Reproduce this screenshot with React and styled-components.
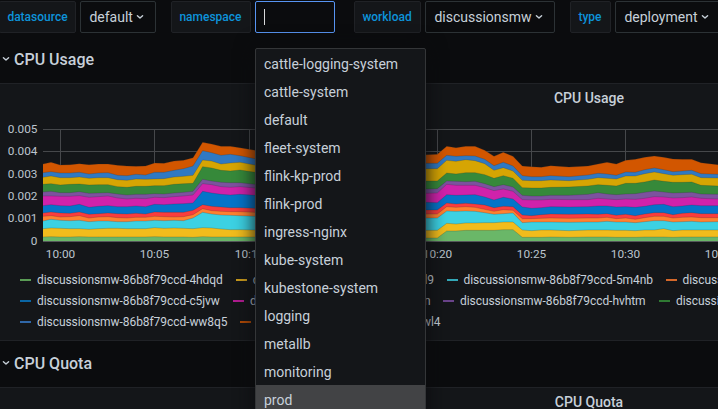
import React from 'react';
import styled, { createGlobalStyle } from 'styled-components';

const GlobalStyle = createGlobalStyle`
  * { box-sizing: border-box; }
  body {
    margin: 0;
    background: #0b0c0e;
    color: #c7d0d9;
    font-family: Roboto, "Liberation Sans", sans-serif;
    font-size: 14px;
    overflow: hidden;
  }
`;

const Page = styled.main`
  position: relative;
  width: 718px;
  height: 409px;
  overflow: hidden;
  background: #0b0c0e;
`;

const Toolbar = styled.div`
  display: flex;
  width: 1178px;
  padding-top: 1px;
  margin-left: -1px;
`;

const Variable = styled.div`
  display: flex;
  flex: none;
  gap: 4px;
  margin-right: ${(p) => p.$after}px;
`;

const VariableLabel = styled.label`
  width: ${(p) => p.$width}px;
  height: 32px;
  padding-left: 7.4px;
  border: 1px solid #202226;
  border-radius: 2px;
  background: #141619;
  color: #0d93da;
  font-size: 12px;
  font-weight: 500;
  line-height: 30px;
  white-space: nowrap;
`;

const VariableValue = styled.button`
  display: flex;
  align-items: center;
  width: ${(p) => p.$width}px;
  height: 32px;
  padding: 0 0 0 8.4px;
  border: 1px solid #2c3235;
  border-radius: 2px;
  background: #0b0c0e;
  color: #c7d0d9;
  font: 14px Roboto, sans-serif;
  gap: 3px;
`;

const SearchField = styled.div`
  display: flex;
  align-items: center;
  width: 80px;
  height: 32px;
  padding-left: 8px;
  border: 1px solid #5794f2;
  border-radius: 2px;
`;

const Caret = styled.span`
  width: 1px;
  height: 16px;
  background: #d8d9da;
`;

const Menu = styled.ul`
  position: absolute;
  left: 255px;
  top: 48px;
  width: 171px;
  height: 400px;
  margin: 0;
  padding: 0;
  list-style: none;
  border: 1px solid #343638;
  border-radius: 2px;
  background: #141619;
  box-shadow: 0 0 20px #0b0c0e;
`;

const MenuItem = styled.li`
  height: 28px;
  padding-left: 8px;
  line-height: 30px;
  background: ${(p) => (p.$active ? '#424345' : 'transparent')};
`;

const SectionHeader = styled.h2`
  display: flex;
  align-items: center;
  gap: 4px;
  height: ${(p) => p.$height}px;
  margin: 0;
  padding: ${(p) => p.$drop}px 0 ${(p) => p.$lift}px 2px;
  font-size: 16px;
  font-weight: 500;
`;

const Panel = styled.section`
  width: 1180px;
  height: ${(p) => p.$height}px;
  margin-left: -1px;
  border: 1px solid #202226;
  background: #141619;
`;

const PanelTitle = styled.h3`
  height: 31px;
  margin: 0;
  font-size: 14px;
  font-weight: 500;
  line-height: 29px;
  text-align: center;
`;

const ChartSvg = styled.svg`
  display: block;
`;

const AxisText = styled.text`
  fill: #bcc5ce;
  font: 11.8px Roboto, sans-serif;
`;

const Legend = styled.div`
  padding: 4px 0 0 20px;
`;

const LegendRow = styled.div`
  display: flex;
  height: 21px;
  align-items: center;
  font-size: 12px;
  letter-spacing: -0.06px;
  white-space: nowrap;
`;

const LegendItem = styled.div`
  display: flex;
  flex: none;
  align-items: center;
  width: ${(p) => p.$width}px;
`;

const Swatch = styled.span`
  width: 11px;
  height: 2px;
  margin: 1px 6px 0 0;
  background: ${(p) => p.$color};
`;

const LegendName = styled.span`
  flex: 1;
  text-align: ${(p) => (p.$end ? 'right' : 'left')};
  padding-right: ${(p) => (p.$end ? 12.5 : 0)}px;
`;

const Chevron = () => (
  <svg width="8" height="8" viewBox="0 0 8 8" fill="none">
    <path d="M1.4 2.8 4 5.1 6.6 2.8" stroke="#c7d0d9" strokeWidth="1.4" strokeLinecap="round" strokeLinejoin="round" />
  </svg>
);

// Band colours from the top of the stack down.
const colors = [
  '#d25600', '#3079c2', '#d6a503', '#36893a', '#7c529e', '#d022ab',
  '#0574c9', '#fa3d3d', '#ff8130', '#3cd1e3', '#f2bc1c', '#6ab768',
];

// Each sample: x, then the upper edge of every band in thirds of a pixel.
const samples = [
  [43, 147, 173, 187, 208, 231, 243, 272, 294, 304, 318, 341, 366],
  [51, 142, 170, 183, 206, 229, 243, 269, 291, 302, 313, 339, 365],
  [60.3, 150, 174, 188, 210, 233, 244, 272, 294, 306, 316, 340, 366],
  [70, 149, 174, 188, 208, 233, 244, 273, 295, 305, 317, 341, 366],
  [79.3, 146, 172, 186, 207, 230, 242, 268, 291, 302, 316, 341, 365],
  [89, 149, 177, 190, 210, 235, 247, 277, 298, 309, 320, 343, 366],
  [98.4, 147, 174, 188, 209, 234, 245, 274, 296, 306, 318, 341, 366],
  [108, 147, 173, 188, 209, 233, 243, 272, 294, 305, 318, 340, 366],
  [117.5, 151, 181, 194, 215, 237, 249, 275, 296, 308, 320, 340, 366],
  [127, 153, 182, 196, 217, 240, 252, 275, 297, 309, 320, 341, 366],
  [136, 154, 178, 192, 214, 238, 250, 273, 295, 307, 318, 341, 366],
  [145.5, 153, 180, 193, 214, 238, 251, 275, 297, 307, 318, 341, 366],
  [154.6, 144, 172, 192, 212, 236, 247, 268, 291, 304, 316, 338, 365],
  [164, 145, 172, 191, 212, 237, 248, 269, 292, 305, 317, 340, 366],
  [174, 138, 166, 186, 208, 234, 245, 267, 292, 306, 316, 339, 366],
  [183.5, 136, 161, 184, 206, 232, 243, 266, 292, 305, 317, 340, 366],
  [193, 128, 153, 181, 205, 229, 240, 264, 286, 299, 309, 341, 367],
  [202.6, 82, 107, 135, 155, 193, 206, 229, 269, 281, 292, 338, 365],
  [211.6, 87, 113, 138, 159, 198, 209, 234, 274, 287, 297, 339, 366],
  [221, 94, 121, 147, 166, 202, 215, 238, 276, 289, 300, 342, 366],
  [230.3, 94, 118, 144, 168, 203, 217, 240, 278, 290, 301, 344, 366],
  [240, 98, 122, 142, 165, 203, 215, 238, 278, 290, 302, 344, 366],
  [255, 106, 131, 150, 172, 208, 219, 241, 280, 292, 304, 345, 366],
  [426, 119, 145, 161, 198, 222, 235, 262, 285, 297, 309, 346, 369],
  [437.3, 118, 145, 161, 198, 221, 234, 263, 285, 297, 309, 346, 369],
  [446.7, 94, 121, 136, 174, 198, 208, 239, 264, 275, 288, 325, 348],
  [456, 98, 124, 139, 177, 199, 211, 241, 267, 277, 289, 327, 348],
  [465.7, 94, 122, 134, 173, 200, 211, 240, 265, 275, 288, 324, 346],
  [475, 94, 123, 137, 173, 199, 211, 239, 267, 277, 289, 324, 346],
  [484.7, 106, 133, 146, 179, 206, 218, 246, 270, 283, 293, 323, 346],
  [494, 124, 152, 166, 190, 215, 227, 255, 278, 289, 298, 323, 346],
  [503.3, 112, 142, 158, 182, 209, 222, 247, 274, 284, 296, 321, 344],
  [513, 124, 153, 168, 190, 216, 229, 252, 275, 286, 294, 321, 344],
  [522.3, 153, 182, 196, 218, 241, 254, 276, 300, 311, 323, 345, 367],
  [531.7, 155, 185, 197, 219, 243, 255, 280, 302, 311, 321, 347, 367],
  [541.3, 157, 185, 197, 219, 243, 255, 278, 299, 310, 321, 345, 367],
  [550.7, 152, 182, 195, 217, 241, 253, 275, 297, 309, 321, 345, 366],
  [569, 156, 185, 197, 216, 241, 254, 276, 298, 310, 322, 347, 367],
  [588, 153, 180, 193, 213, 238, 254, 275, 297, 309, 321, 345, 366],
  [598, 147, 175, 188, 209, 233, 250, 273, 298, 309, 321, 345, 366],
  [607, 142, 177, 190, 211, 237, 252, 273, 296, 307, 319, 345, 366],
  [616.3, 147, 181, 192, 213, 239, 254, 276, 301, 311, 321, 346, 367],
  [625.7, 136, 171, 183, 205, 237, 252, 275, 298, 309, 321, 346, 367],
  [635.3, 133, 172, 183, 205, 236, 253, 277, 302, 313, 323, 347, 367],
  [644.7, 127, 164, 176, 201, 232, 250, 274, 297, 308, 320, 345, 366],
  [654.3, 123, 159, 171, 195, 228, 245, 269, 293, 304, 317, 345, 366],
  [663.7, 127, 164, 176, 199, 231, 246, 268, 293, 304, 317, 341, 366],
  [673, 132, 170, 181, 202, 234, 249, 275, 299, 309, 321, 347, 367],
  [682.3, 133, 168, 179, 202, 233, 248, 273, 295, 307, 320, 345, 366],
  [691.7, 133, 166, 178, 201, 232, 246, 270, 293, 306, 319, 345, 366],
  [701, 143, 176, 188, 211, 237, 250, 272, 296, 308, 321, 345, 366],
  [718, 149, 178, 189, 213, 238, 252, 272, 296, 308, 320, 345, 366],
];

const edge = (i) => samples.map((s) => `${s[0]},${(s[i + 1] / 3).toFixed(2)}`);
const bandPoints = (i) => `${edge(i).join(' ')} 718,126.3 43,126.3`;

const yTicks = [
  [14.5, '0.005'], [36.5, '0.004'], [59.5, '0.003'],
  [81.5, '0.002'], [103.5, '0.001'], [126.5, '0'],
];
const xTicks = [
  [60.5, '10:00'], [154.5, '10:05'], [249.5, '10:10'], [343.5, '10:15'],
  [437.5, '10:20'], [531.5, '10:25'], [625.5, '10:30'], [719.5, '10:35'],
];

const Chart = () => (
  <ChartSvg width="718" height="150" viewBox="0 0 718 150">
    <g stroke="#46484b" strokeWidth="1">
      {yTicks.map(([y]) => <line key={y} x1="43" x2="718" y1={y} y2={y} />)}
      {xTicks.map(([x]) => <line key={x} x1={x} x2={x} y1="14" y2="126" />)}
    </g>
    {colors.map((color, i) => (
      <g key={color}>
        <polygon points={bandPoints(i)} fill={color} />
        <polyline points={edge(i).join(' ')} fill="none" stroke="#22252a" strokeOpacity="0.35" strokeWidth="0.6" />
      </g>
    ))}
    <line x1="43" x2="718" y1="126.5" y2="126.5" stroke="#55585a" />
    {yTicks.map(([y, label]) => (
      <AxisText key={label} x="37.5" y={y + 3.6} textAnchor="end">{label}</AxisText>
    ))}
    {xTicks.map(([x, label]) => (
      <AxisText key={label} x={x} y="143.2" textAnchor="middle">{label}</AxisText>
    ))}
  </ChartSvg>
);

const legendRows = [
  [
    { id: '4hdqd', color: '#5a9c55', width: 216 },
    { id: 'bdxl9', color: '#c99a1c', width: 210.5, end: true },
    { id: '5m4nb', color: '#33a8b8', width: 219 },
    { id: 'kz7tc', color: '#d5682a', width: 210 },
  ],
  [
    { id: 'c5jvw', color: '#0a66a5', width: 213 },
    { id: 'g6frn', color: '#b01c90', width: 210, end: true },
    { id: 'hvhtm', color: '#69438a', width: 216 },
    { id: 'n2d8s', color: '#2f7a33', width: 210 },
  ],
  [
    { id: 'ww8q5', color: '#3067a8', width: 220 },
    { id: 'zjwl4', color: '#b14a05', width: 213, end: true },
  ],
];

const namespaces = [
  'cattle-logging-system', 'cattle-system', 'default', 'fleet-system',
  'flink-kp-prod', 'flink-prod', 'ingress-nginx', 'kube-system',
  'kubestone-system', 'logging', 'metallb', 'monitoring', 'prod',
];

export default function App() {
  return (
    <Page>
      <GlobalStyle />
      <Toolbar>
        <Variable $after={15}>
          <VariableLabel $width={77}>datasource</VariableLabel>
          <VariableValue $width={76}>default <Chevron /></VariableValue>
        </Variable>
        <Variable $after={19}>
          <VariableLabel $width={80}>namespace</VariableLabel>
          <SearchField><Caret /></SearchField>
        </Variable>
        <Variable $after={15}>
          <VariableLabel $width={67}>workload</VariableLabel>
          <VariableValue $width={130}>discussionsmw <Chevron /></VariableValue>
        </Variable>
        <Variable $after={0}>
          <VariableLabel $width={41}>type</VariableLabel>
          <VariableValue $width={106}>deployment <Chevron /></VariableValue>
        </Variable>
      </Toolbar>
      <SectionHeader $height={50} $drop={2} $lift={0}><Chevron />CPU Usage</SectionHeader>
      <Panel $height={258}>
        <PanelTitle>CPU Usage</PanelTitle>
        <Chart />
        <Legend>
          {legendRows.map((row) => (
            <LegendRow key={row[0].id}>
              {row.map(({ id, color, width, end }) => (
                <LegendItem key={id} $width={width}>
                  <Swatch $color={color} />
                  <LegendName $end={end}>discussionsmw-86b8f79ccd-{id}</LegendName>
                </LegendItem>
              ))}
            </LegendRow>
          ))}
        </Legend>
      </Panel>
      <SectionHeader $height={46} $drop={0} $lift={2}><Chevron />CPU Quota</SectionHeader>
      <Panel $height={200}>
        <PanelTitle>CPU Quota</PanelTitle>
      </Panel>
      <Menu>
        {namespaces.map((name) => (
          <MenuItem key={name} $active={name === 'prod'}>{name}</MenuItem>
        ))}
      </Menu>
    </Page>
  );
}
